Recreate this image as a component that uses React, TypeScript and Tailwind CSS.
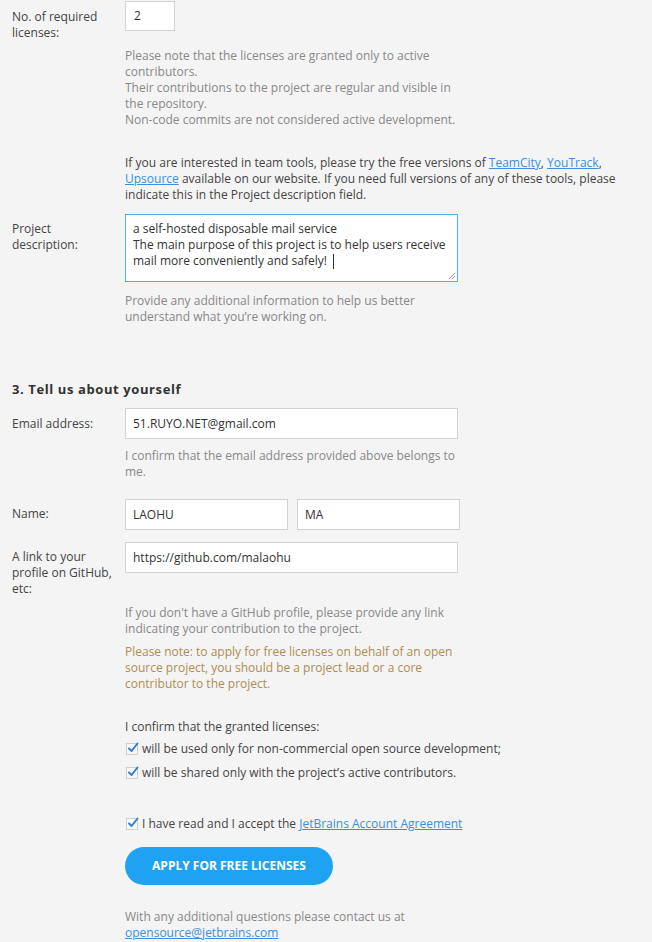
import type { ReactNode } from "react";

const font = { fontFamily: '"Open Sans", "Liberation Sans", sans-serif' };

function Row({ label, labelPad = "pt-[8px]", children }: { label: ReactNode; labelPad?: string; children: ReactNode }) {
  return (
    <div className="flex items-start">
      <div className={`w-[113px] shrink-0 text-[#444] whitespace-nowrap ${labelPad}`}>{label}</div>
      <div className="flex-1">{children}</div>
    </div>
  );
}

function TextInput({ value, className = "" }: { value: string; className?: string }) {
  return (
    <div className={`h-[31px] border border-[#d2d2d2] bg-white px-[7px] flex items-center text-[#333] ${className}`}>
      {value}
    </div>
  );
}

function Check({ children }: { children: ReactNode }) {
  return (
    <div className="flex items-center h-[24px] whitespace-nowrap">
      <span className="relative w-[12px] h-[12px] mr-[4px] ml-[1px] border border-[#cfcfcf] bg-[#f8f8f8] shrink-0">
        <svg viewBox="0 0 12 12" className="absolute -top-[2px] left-[0px] w-[12px] h-[12px]">
          <path d="M2 6.5 L4.6 9 L10.5 1.5" fill="none" stroke="#2f7fd0" strokeWidth="2" strokeLinecap="round" strokeLinejoin="round" />
        </svg>
      </span>
      <span className="text-[#444]">{children}</span>
    </div>
  );
}

const A = ({ children }: { children: ReactNode }) => (
  <a className="text-[#3b8fe0] underline">{children}</a>
);

export default function App() {
  return (
    <div className="min-h-[942px] bg-[#f4f4f4] pl-3 pt-[1px] text-[12px] leading-[16px]" style={font}>
      <Row label={<>No. of required<br />licenses:</>}>
        <div className="w-[50px] h-[30px] border border-[#d2d2d2] bg-white px-[8px] flex items-center text-[#333]">2</div>
      </Row>

      <div className="ml-[113px] whitespace-nowrap">
        <p className="mt-[7px] text-[#888]">
          Please note that the licenses are granted only to active
          <br />
          contributors.
          <br />
          Their contributions to the project are regular and visible in
          <br />
          the repository.
          <br />
          Non-code commits are not considered active development.
        </p>

        <p className="mt-[27px] text-[#444]">
          If you are interested in team tools, please try the free versions of <A>TeamCity</A>, <A>YouTrack</A>,
          <br />
          <A>Upsource</A> available on our website. If you need full versions of any of these tools, please
          <br />
          indicate this in the Project description field.
        </p>
      </div>

      <div className="mt-[11px]">
        <Row label={<>Project<br />description:</>} labelPad="pt-[7px]">
          <div className="relative w-[333px] h-[68px] border border-[#55b0e6] bg-white px-[7px] pt-[6px] text-[#333] whitespace-nowrap">
            a self-hosted disposable mail service
            <br />
            The main purpose of this project is to help users receive
            <br />
            mail more conveniently and safely!{" "}
            <span className="inline-block w-px h-[15px] bg-[#333] align-middle ml-[3px]" />
            <svg viewBox="0 0 10 10" className="absolute right-[1px] bottom-[1px] w-[9px] h-[9px]">
              <path d="M9 2 L2 9 M9 5.5 L5.5 9" stroke="#888" strokeWidth="1" />
            </svg>
          </div>
        </Row>
      </div>

      <p className="ml-[113px] mt-[11px] text-[#888] whitespace-nowrap">
        Provide any additional information to help us better
        <br />
        understand what you’re working on.
      </p>

      <h2 className="mt-[56px] text-[13px] font-bold text-[#333] tracking-[0.6px]">3. Tell us about yourself</h2>

      <div className="mt-[11px]">
        <Row label="Email address:">
          <TextInput value="51.RUYO.NET@gmail.com" className="w-[333px]" />
        </Row>
      </div>
      <p className="ml-[113px] mt-[9px] text-[#888] whitespace-nowrap">
        I confirm that the email address provided above belongs to
        <br />
        me.
      </p>

      <div className="mt-[19px]">
        <Row label="Name:" labelPad="pt-[7px]">
          <div className="flex gap-[9px]">
            <TextInput value="LAOHU" className="w-[163px] h-[30px]" />
            <TextInput value="MA" className="w-[163px] h-[30px]" />
          </div>
        </Row>
      </div>

      <div className="mt-[12px]">
        <Row label={<>A link to your<br />profile on GitHub,<br />etc:</>} labelPad="pt-[7px]">
          <TextInput value="https://github.com/malaohu" className="w-[333px] h-[30px]" />
        </Row>
      </div>

      <div className="ml-[113px] whitespace-nowrap">
        <p className="mt-[8px] text-[#888]">
          If you don't have a GitHub profile, please provide any link
          <br />
          indicating your contribution to the project.
        </p>
        <p className="mt-[7px] text-[#ae8d4e]">
          Please note: to apply for free licenses on behalf of an open
          <br />
          source project, you should be a project lead or a core
          <br />
          contributor to the project.
        </p>

        <p className="mt-[27px] text-[#444]">I confirm that the granted licenses:</p>
        <div className="mt-[2px]">
          <Check>will be used only for non-commercial open source development;</Check>
          <Check>will be shared only with the project’s active contributors.</Check>
        </div>

        <div className="mt-[27px]">
          <Check>
            I have read and I accept the <A>JetBrains Account Agreement</A>
          </Check>
        </div>

        <button className="mt-[11px] w-[208px] h-[38px] rounded-[19px] bg-[#1fa2f1] text-white font-bold text-[12px]">
          APPLY FOR FREE LICENSES
        </button>

        <p className="mt-[24px] text-[#888]">
          With any additional questions please contact us at
          <br />
          <A>opensource@jetbrains.com</A>
        </p>
      </div>
    </div>
  );
}
